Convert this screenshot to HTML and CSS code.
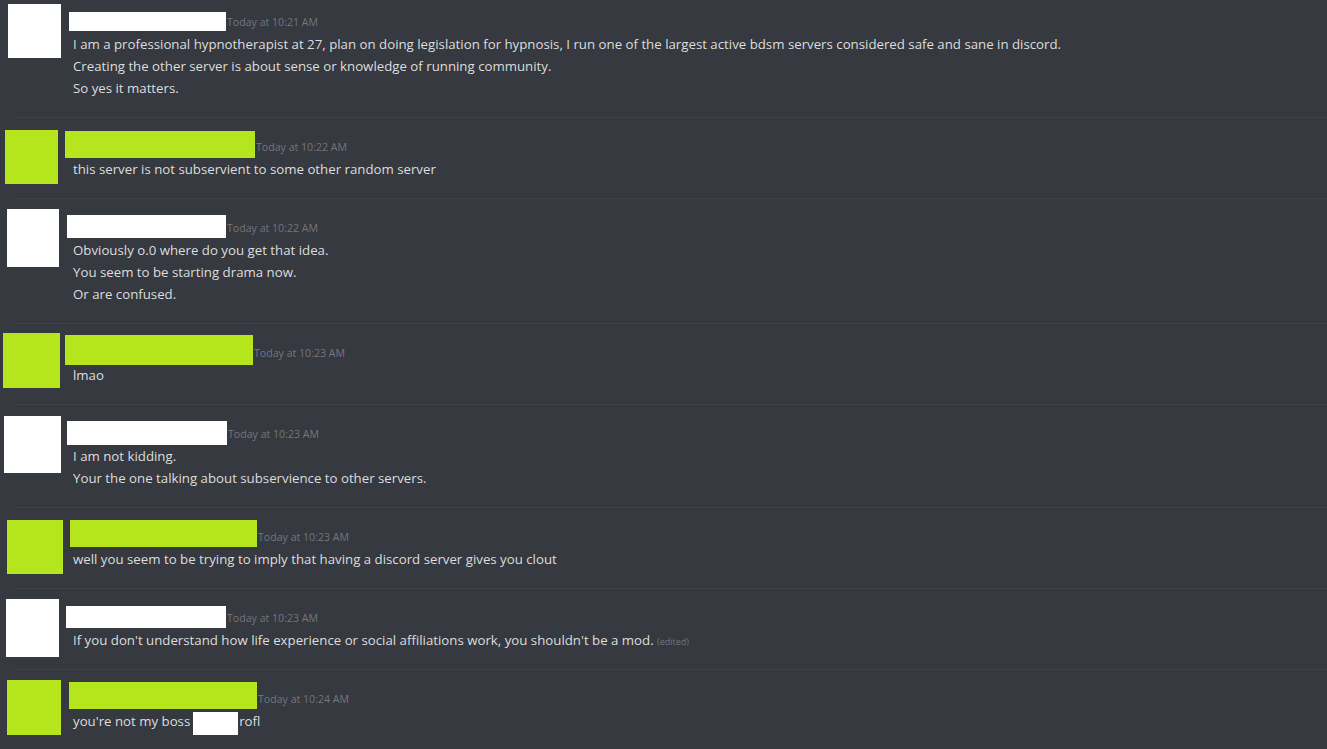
FILE: index.html
```html
<!DOCTYPE html>
<html>
<head>
<meta charset="utf-8">
<link rel="stylesheet" href="styles.css">
</head>
<body>
<div class="chat">
  <div class="msg m1">
    <div class="avatar white"></div>
    <div class="content">
      <div class="head"><span class="name white"></span><span class="ts">Today at 10:21 AM</span></div>
      <div class="line">I am a professional hypnotherapist at 27, plan on doing legislation for hypnosis, I run one of the largest active bdsm servers considered safe and sane in discord.</div>
      <div class="line">Creating the other server is about sense or knowledge of running community.</div>
      <div class="line">So yes it matters.</div>
    </div>
  </div>
  <div class="msg m2">
    <div class="avatar lime"></div>
    <div class="content">
      <div class="head"><span class="name lime"></span><span class="ts">Today at 10:22 AM</span></div>
      <div class="line">this server is not subservient to some other random server</div>
    </div>
  </div>
  <div class="msg m3">
    <div class="avatar white"></div>
    <div class="content">
      <div class="head"><span class="name white"></span><span class="ts">Today at 10:22 AM</span></div>
      <div class="line">Obviously o.0 where do you get that idea.</div>
      <div class="line">You seem to be starting drama now.</div>
      <div class="line">Or are confused.</div>
    </div>
  </div>
  <div class="msg m4">
    <div class="avatar lime"></div>
    <div class="content">
      <div class="head"><span class="name lime"></span><span class="ts">Today at 10:23 AM</span></div>
      <div class="line">lmao</div>
    </div>
  </div>
  <div class="msg m5">
    <div class="avatar white"></div>
    <div class="content">
      <div class="head"><span class="name white"></span><span class="ts">Today at 10:23 AM</span></div>
      <div class="line">I am not kidding.</div>
      <div class="line">Your the one talking about subservience to other servers.</div>
    </div>
  </div>
  <div class="msg m6">
    <div class="avatar lime"></div>
    <div class="content">
      <div class="head"><span class="name lime"></span><span class="ts">Today at 10:23 AM</span></div>
      <div class="line">well you seem to be trying to imply that having a discord server gives you clout</div>
    </div>
  </div>
  <div class="msg m7">
    <div class="avatar white"></div>
    <div class="content">
      <div class="head"><span class="name white"></span><span class="ts">Today at 10:23 AM</span></div>
      <div class="line">If you don't understand how life experience or social affiliations work, you shouldn't be a mod. <span class="edited">(edited)</span></div>
    </div>
  </div>
  <div class="msg m8">
    <div class="avatar lime"></div>
    <div class="content">
      <div class="head"><span class="name lime"></span><span class="ts">Today at 10:24 AM</span></div>
      <div class="line">you're not my boss <span class="inline-redact"></span> rofl</div>
    </div>
  </div>
</div>
</body>
</html>
```

FILE: styles.css
```css
html, body {
  margin: 0;
  padding: 0;
  background: #36393f;
  overflow: hidden;
}
body {
  width: 1327px;
  height: 749px;
  font-family: "Open Sans", "Noto Sans", sans-serif;
  color: #dcddde;
}
.chat {
  margin-top: -8px;
}
.msg {
  display: grid;
  grid-template-columns: 59px 1fr;
  align-items: start;
  border-top: 1px solid #3f4248;
  margin-left: 14px;
  padding-bottom: 18px;
}
.m1 { border-top-color: transparent; }
.content {
  padding-top: 18px;
}
.head {
  display: flex;
  align-items: flex-start;
  height: 22px;
}
.name {
  display: block;
  flex: none;
}
.ts {
  font-size: 10.6px;
  line-height: 22px;
  color: #72767d;
  margin-left: 1px;
}
.line {
  font-size: 13.25px;
  line-height: 22px;
  height: 22px;
  white-space: nowrap;
}
.edited {
  font-size: 9px;
  line-height: 0;
  color: #72767d;
}
.white { background: #ffffff; }
.lime { background: #b5e61d; }
.inline-redact {
  display: inline-block;
  width: 45px;
  height: 23px;
  background: #ffffff;
  vertical-align: -9px;
  margin: 0 -2px 0 -1px;
}

/* per-message redaction geometry (offsets relative to each divider) */
.avatar { margin-bottom: -60px; }

.m1 .avatar { margin-left: -6px; margin-top: 11px; width: 53px; height: 54px; }
.m1 .name { margin-left: -4px; margin-top: 1px; width: 157px; height: 19px; }

.m2 .avatar { margin-left: -9px; margin-top: 12px; width: 53px; height: 54px; }
.m2 .name { margin-left: -8px; margin-top: -5px; width: 190px; height: 27px; }

.m3 .avatar { margin-left: -7px; margin-top: 10px; width: 52px; height: 58px; }
.m3 .name { margin-left: -6px; margin-top: -2px; width: 159px; height: 23px; }

.m4 .avatar { margin-left: -11px; margin-top: 9px; width: 57px; height: 55px; }
.m4 .name { margin-left: -8px; margin-top: -7px; width: 188px; height: 30px; }

.m5 .avatar { margin-left: -10px; margin-top: 11px; width: 57px; height: 57px; }
.m5 .name { margin-left: -6px; margin-top: -2px; width: 160px; height: 24px; }

.m6 .avatar { margin-left: -7px; margin-top: 12px; width: 56px; height: 54px; }
.m6 .name { margin-left: -3px; margin-top: -6px; width: 187px; height: 27px; }

.m7 .avatar { margin-left: -8px; margin-top: 10px; width: 53px; height: 58px; }
.m7 .name { margin-left: -7px; margin-top: -1px; width: 160px; height: 22px; }

.m8 .avatar { margin-left: -7px; margin-top: 10px; width: 54px; height: 55px; }
.m8 .name { margin-left: -4px; margin-top: -6px; width: 188px; height: 27px; }
```
